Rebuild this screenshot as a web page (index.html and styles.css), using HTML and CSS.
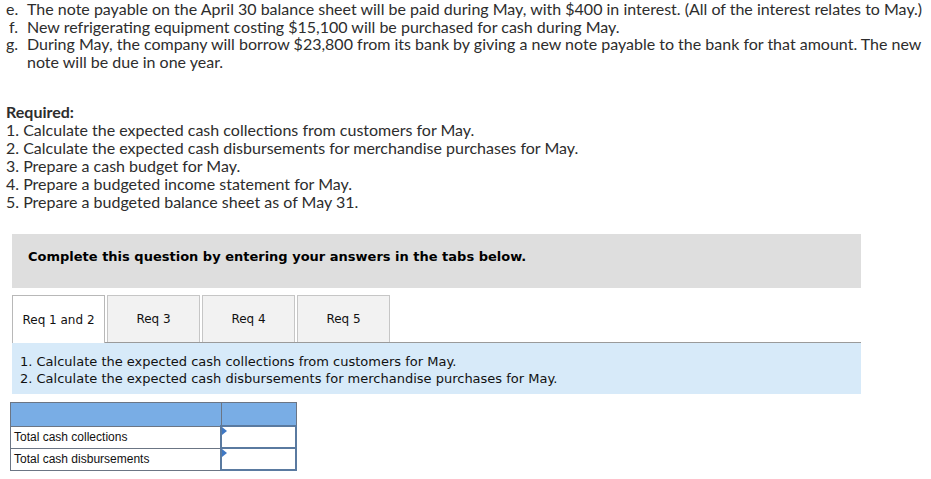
FILE: index.html
```html
<!DOCTYPE html>
<html>
<head>
<meta charset="utf-8">
<link rel="stylesheet" href="styles.css">
</head>
<body>
<div class="page">
  <ul class="items">
    <li><span class="lbl">e.</span><span>The note payable on the April 30 balance sheet will be paid during May, with $400 in interest. (All of the interest relates to May.)</span></li>
    <li><span class="lbl lbl-f">f.</span><span>New refrigerating equipment costing $15,100 will be purchased for cash during May.</span></li>
    <li><span class="lbl">g.</span><span>During May, the company will borrow $23,800 from its bank by giving a new note payable to the bank for that amount. The new note will be due in one year.</span></li>
  </ul>

  <div class="required">
    <div class="req-title">Required:</div>
    <div>1. Calculate the expected cash collections from customers for May.</div>
    <div>2. Calculate the expected cash disbursements for merchandise purchases for May.</div>
    <div>3. Prepare a cash budget for May.</div>
    <div>4. Prepare a budgeted income statement for May.</div>
    <div>5. Prepare a budgeted balance sheet as of May 31.</div>
  </div>

  <div class="notice">Complete this question by entering your answers in the tabs below.</div>

  <div class="tabs">
    <div class="tab active">Req 1 and 2</div>
    <div class="tab">Req 3</div>
    <div class="tab">Req 4</div>
    <div class="tab">Req 5</div>
  </div>

  <div class="instructions">
    <div>1. Calculate the expected cash collections from customers for May.</div>
    <div>2. Calculate the expected cash disbursements for merchandise purchases for May.</div>
  </div>

  <table class="answers">
    <tr class="head"><td class="c1"></td><td class="c2"></td></tr>
    <tr class="row"><td class="c1">Total cash collections</td><td class="c2 input"><span class="mark"></span></td></tr>
    <tr class="row"><td class="c1">Total cash disbursements</td><td class="c2 input"><span class="mark"></span></td></tr>
  </table>
</div>
</body>
</html>
```
FILE: styles.css
```css
html, body {
  margin: 0;
  padding: 0;
  background: #fff;
}

.page {
  width: 931px;
  height: 479px;
  overflow: hidden;
}

.items {
  list-style: none;
  margin: 0;
  padding: 0 8px 0 6px;
  font-family: "Lato", sans-serif;
  font-size: 16px;
  line-height: 17.5px;
  color: #2d2d2d;
}

.items li {
  display: flex;
}

.lbl {
  flex: 0 0 21px;
}

.lbl-f {
  padding-left: 3px;
  flex-basis: 18px;
}

.required {
  margin: 33px 0 0 6px;
  font-family: "Lato", sans-serif;
  font-size: 16px;
  line-height: 18px;
  color: #2d2d2d;
}

.req-title {
  font-weight: bold;
}

.notice {
  margin: 23px 0 0 12px;
  width: 849px;
  height: 54px;
  box-sizing: border-box;
  background: #dedede;
  padding: 14px 0 0 16px;
  font-family: "DejaVu Sans", Verdana, sans-serif;
  font-weight: bold;
  font-size: 13px;
  line-height: 18px;
  color: #000;
}

.tabs {
  display: flex;
  gap: 2px;
  margin: 7px 0 0 12px;
  width: 849px;
  height: 48px;
  box-sizing: border-box;
  border-bottom: 1px solid #9a9a9a;
}

.tab {
  width: 93px;
  height: 47px;
  box-sizing: border-box;
  background: #f2f2f2;
  border: 1px solid #c6c6c6;
  border-bottom: none;
  display: flex;
  align-items: center;
  justify-content: center;
  font-family: "DejaVu Sans", Verdana, sans-serif;
  font-size: 12px;
  color: #111;
}

.tab.active {
  background: #fff;
  border-color: #b8b8b8;
  height: 48px;
  margin-bottom: -1px;
}

.instructions {
  margin: 0 0 0 12px;
  width: 849px;
  height: 51px;
  box-sizing: border-box;
  background: #d7eaf9;
  padding: 10px 0 0 8px;
  font-family: "DejaVu Sans", Verdana, sans-serif;
  font-size: 13px;
  line-height: 17px;
  color: #111;
}

.answers {
  margin: 8px 0 0 10px;
  border-collapse: collapse;
  font-family: "Liberation Sans", Arial, sans-serif;
  font-size: 12px;
  color: #111;
}

.answers td {
  border: 1px solid #6b7584;
  padding: 0 0 0 3px;
  height: 22px;
}

.answers .row td {
  height: 20px;
}

.answers .c1 {
  width: 206px;
}

.answers .c2 {
  width: 71px;
}

.answers .head td {
  background: #79ade5;
  border-color: #6b7584;
}

.answers td.input {
  position: relative;
  border: 2px solid #5a7aa0;
  padding: 0;
}

.mark {
  position: absolute;
  left: 0;
  top: 0;
  width: 0;
  height: 0;
  border-top: 4px solid transparent;
  border-bottom: 4px solid transparent;
  border-left: 5px solid #3f78c4;
}
```
